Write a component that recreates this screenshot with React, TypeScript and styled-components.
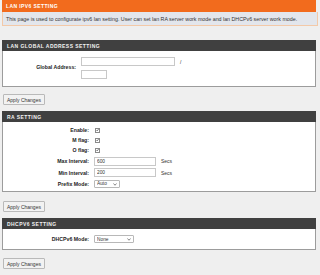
import React from "react";
import styled, { createGlobalStyle } from "styled-components";

const Global = createGlobalStyle`
  html, body {
    margin: 0;
    padding: 0;
    background: #efefef;
  }
  body {
    font-family: "Liberation Sans", Arial, sans-serif;
    color: #222;
  }
`;

const Page = styled.div`
  width: 320px;
  padding: 0 4px 0 2px;
  box-sizing: border-box;
`;

const TitleBar = styled.div`
  height: 12px;
  background: #f26b1d;
  color: #fff;
  font-weight: bold;
  font-size: 5px;
  letter-spacing: 0.4px;
  display: flex;
  align-items: center;
  padding-left: 4px;
`;

const Intro = styled.div`
  height: 14px;
  box-sizing: border-box;
  background: #e3e6ec;
  border: 1px solid #f3c9a8;
  border-top: none;
  font-size: 5.3px;
  color: #333;
  display: flex;
  align-items: center;
  padding-left: 3px;
  margin-right: -2px;
  margin-bottom: 14px;
  white-space: nowrap;
`;

const SectionHead = styled.div`
  height: 10px;
  background: #404040;
  color: #f2f2f2;
  font-weight: bold;
  font-size: 5px;
  letter-spacing: 0.45px;
  display: flex;
  align-items: center;
  padding-left: 4px;
  border: 1px solid #404040;
  border-bottom: none;
`;

const Panel = styled.div<{ $h: number; $label: number; $top: number }>`
  height: ${(p) => p.$h}px;
  box-sizing: border-box;
  background: #fff;
  border: 1px solid #9c9c9c;
  border-top: none;
  padding-top: ${(p) => p.$top}px;
  display: grid;
  grid-template-columns: ${(p) => p.$label}px 1fr;
  column-gap: 5px;
  align-content: start;
`;

const Label = styled.div<{ $h: number }>`
  height: ${(p) => p.$h}px;
  display: flex;
  align-items: center;
  justify-content: flex-end;
  font-weight: bold;
  font-size: 5.2px;
  color: #222;
`;

const Cell = styled.div<{ $h: number }>`
  min-height: ${(p) => p.$h}px;
  display: flex;
  align-items: center;
  flex-wrap: wrap;
  column-gap: 5px;
  row-gap: 2px;
  font-size: 5px;
  color: #333;
`;

const Break = styled.div`
  flex-basis: 100%;
  height: 0;
`;

const Field = styled.input<{ $w: number }>`
  width: ${(p) => p.$w}px;
  height: 9px;
  box-sizing: border-box;
  border: 1px solid #c8c8c8;
  padding: 0 2px;
  margin: 0;
  font-family: "Liberation Sans", Arial, sans-serif;
  font-size: 4.8px;
  color: #333;
  background: #fff;
  outline: none;
`;

const Box = styled.span`
  width: 5px;
  height: 5px;
  box-sizing: border-box;
  border: 1px solid #8a8a8a;
  background: #fff;
  display: flex;
  align-items: center;
  justify-content: center;
  margin-left: 1px;
`;

const SelectWrap = styled.div<{ $w: number }>`
  position: relative;
  width: ${(p) => p.$w}px;
  height: 8px;
`;

const Select = styled.select`
  appearance: none;
  width: 100%;
  height: 100%;
  box-sizing: border-box;
  border: 1px solid #b8b8b8;
  border-radius: 1px;
  padding: 0 0 0 2px;
  margin: 0;
  font-family: "Liberation Sans", Arial, sans-serif;
  font-size: 4.8px;
  color: #333;
  background: #fff;
  outline: none;
`;

const Arrow = styled.svg`
  position: absolute;
  right: 3px;
  top: 3px;
  width: 4px;
  height: 3px;
  pointer-events: none;
`;

const Button = styled.button`
  display: block;
  height: 11px;
  padding: 0 3px;
  margin: 0;
  box-sizing: border-box;
  background: #f2f2f2;
  border: 1px solid #b9b9b9;
  border-radius: 1px;
  font-family: "Liberation Sans", Arial, sans-serif;
  font-size: 5px;
  color: #333;
  margin-left: 1px;
`;

const Gap = styled.div<{ $h: number }>`
  height: ${(p) => p.$h}px;
`;

function Check() {
  return (
    <Box>
      <svg width="4" height="4" viewBox="0 0 8 8">
        <path d="M1 4.2 L3.2 6.4 L7 1.4" fill="none" stroke="#333" strokeWidth="1.6" />
      </svg>
    </Box>
  );
}

function Dropdown({ w, value }: { w: number; value: string }) {
  return (
    <SelectWrap $w={w}>
      <Select defaultValue={value}>
        <option>{value}</option>
      </Select>
      <Arrow viewBox="0 0 8 6">
        <path d="M1 1 L4 4.5 L7 1" fill="none" stroke="#555" strokeWidth="1.4" />
      </Arrow>
    </SelectWrap>
  );
}

export default function App() {
  return (
    <Page>
      <Global />
      <TitleBar>LAN IPV6 SETTING</TitleBar>
      <Intro>
        This page is used to configurate ipv6 lan setting. User can set lan RA server work mode and lan
        DHCPv6 server work mode.
      </Intro>

      <SectionHead>LAN GLOBAL ADDRESS SETTING</SectionHead>
      <Panel $h={36} $label={73} $top={6}>
        <Label $h={20}>Global Address:</Label>
        <Cell $h={20}>
          <Field $w={94} />
          <span>/</span>
          <Break />
          <Field $w={26} />
        </Cell>
      </Panel>
      <Gap $h={7} />
      <Button>Apply Changes</Button>
      <Gap $h={6} />

      <SectionHead>RA SETTING</SectionHead>
      <Panel $h={70} $label={86} $top={3}>
        <Label $h={10}>Enable:</Label>
        <Cell $h={10}>
          <Check />
        </Cell>
        <Label $h={10}>M flag:</Label>
        <Cell $h={10}>
          <Check />
        </Cell>
        <Label $h={10}>O flag:</Label>
        <Cell $h={10}>
          <Check />
        </Cell>
        <Label $h={12}>Max Interval:</Label>
        <Cell $h={12}>
          <Field $w={62} defaultValue="600" />
          <span>Secs</span>
        </Cell>
        <Label $h={11}>Min Interval:</Label>
        <Cell $h={11}>
          <Field $w={62} defaultValue="200" />
          <span>Secs</span>
        </Cell>
        <Label $h={11}>Prefix Mode:</Label>
        <Cell $h={11}>
          <Dropdown w={26} value="Auto" />
        </Cell>
      </Panel>
      <Gap $h={9} />
      <Button>Apply Changes</Button>
      <Gap $h={6} />

      <SectionHead>DHCPV6 SETTING</SectionHead>
      <Panel $h={21} $label={86} $top={5}>
        <Label $h={10}>DHCPv6 Mode:</Label>
        <Cell $h={10}>
          <Dropdown w={40} value="None" />
        </Cell>
      </Panel>
      <Gap $h={8} />
      <Button>Apply Changes</Button>
    </Page>
  );
}
